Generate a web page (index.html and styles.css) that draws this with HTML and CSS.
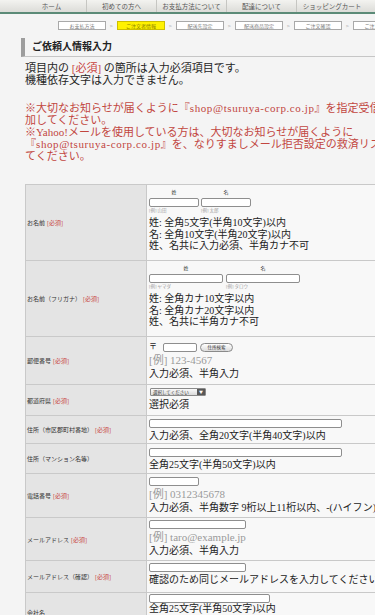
FILE: index.html
```html
<!DOCTYPE html>
<html lang="ja">
<head>
<meta charset="utf-8">
<title>ご依頼人情報入力</title>
<link rel="stylesheet" href="styles.css">
</head>
<body>
<div class="page">
  <nav class="gnav">
    <a class="gnav-item">ホーム</a>
    <a class="gnav-item">初めての方へ</a>
    <a class="gnav-item">お支払方法について</a>
    <a class="gnav-item">配達について</a>
    <a class="gnav-item">ショッピングカート</a>
  </nav>

  <ol class="steps">
    <li class="step">お支払方法</li><li class="step-sep">&gt;</li>
    <li class="step step-current">ご注文者情報</li><li class="step-sep">&gt;</li>
    <li class="step">配送先設定</li><li class="step-sep">&gt;</li>
    <li class="step">配送商品設定</li><li class="step-sep">&gt;</li>
    <li class="step">ご注文確認</li><li class="step-sep">&gt;</li>
    <li class="step">ご注文完了</li>
  </ol>

  <h2 class="heading">ご依頼人情報入力</h2>

  <p class="intro">項目内の <span class="req">[必須]</span> の箇所は入力必須項目です。<br>機種依存文字は入力できません。</p>

  <p class="notice">※大切なお知らせが届くように『<span class="mail">shop@tsuruya-corp.co.jp</span>』を指定受信設定に追<br>加してください。<br>※Yahoo!メールを使用している方は、大切なお知らせが届くように<br>『<span class="mail">shop@tsuruya-corp.co.jp</span>』を、なりすましメール拒否設定の救済リストに追加し<br>てください。</p>

  <div class="form">
    <div class="row row-name">
      <div class="label">お名前 <span class="req">[必須]</span></div>
      <div class="field pt4">
        <div class="name-pair">
          <div class="name-col"><div class="name-cap">姓</div><input type="text" class="txt w50"><div class="hint">[例] 山田</div></div>
          <div class="name-col"><div class="name-cap">名</div><input type="text" class="txt w50"><div class="hint">[例] 太郎</div></div>
        </div>
        <div class="note mt3">姓: 全角5文字(半角10文字)以内</div>
        <div class="note">名: 全角10文字(半角20文字)以内</div>
        <div class="note">姓、名共に入力必須、半角カナ不可</div>
      </div>
    </div>

    <div class="row row-name">
      <div class="label">お名前（フリガナ） <span class="req">[必須]</span></div>
      <div class="field pt4">
        <div class="name-pair name-pair-wide">
          <div class="name-col"><div class="name-cap">姓</div><input type="text" class="txt w74"><div class="hint">[例] ヤマダ</div></div>
          <div class="name-col"><div class="name-cap">名</div><input type="text" class="txt w74"><div class="hint">[例] タロウ</div></div>
        </div>
        <div class="note mt3">姓: 全角カナ10文字以内</div>
        <div class="note">名: 全角カナ20文字以内</div>
        <div class="note">姓、名共に半角カナ不可</div>
      </div>
    </div>

    <div class="row row-zip">
      <div class="label">郵便番号 <span class="req">[必須]</span></div>
      <div class="field pt5">
        <div class="zip">
          <span class="postmark">〒</span>
          <input type="text" class="txt w34">
          <span class="btn">住所検索</span>
        </div>
        <div class="ex">[例] 123-4567</div>
        <div class="note">入力必須、半角入力</div>
      </div>
    </div>

    <div class="row row-pref">
      <div class="label">都道府県 <span class="req">[必須]</span></div>
      <div class="field pt3">
        <div class="select"><span class="select-text">選択してください</span><span class="select-arrow">▼</span></div>
        <div class="note mt3">選択必須</div>
      </div>
    </div>

    <div class="row row-addr1">
      <div class="label">住所（市区郡町村番地） <span class="req">[必須]</span></div>
      <div class="field pt3">
        <input type="text" class="txt w193">
        <div class="note mt2">入力必須、全角20文字(半角40文字)以内</div>
      </div>
    </div>

    <div class="row row-addr2">
      <div class="label">住所（マンション名等）</div>
      <div class="field pt4">
        <input type="text" class="txt w193">
        <div class="note mt2">全角25文字(半角50文字)以内</div>
      </div>
    </div>

    <div class="row row-tel">
      <div class="label">電話番号 <span class="req">[必須]</span></div>
      <div class="field pt3">
        <input type="text" class="txt w50">
        <div class="ex">[例] 0312345678</div>
        <div class="note">入力必須、半角数字 9桁以上11桁以内、-(ハイフン)不要</div>
      </div>
    </div>

    <div class="row row-mail">
      <div class="label">メールアドレス <span class="req">[必須]</span></div>
      <div class="field pt2">
        <input type="text" class="txt w97">
        <div class="ex">[例] taro@example.jp</div>
        <div class="note">入力必須、半角入力</div>
      </div>
    </div>

    <div class="row row-mail2">
      <div class="label">メールアドレス（確認） <span class="req">[必須]</span></div>
      <div class="field pt2">
        <input type="text" class="txt w97">
        <div class="note mt2">確認のため同じメールアドレスを入力してください</div>
      </div>
    </div>

    <div class="row row-company">
      <div class="label">会社名</div>
      <div class="field pt1">
        <input type="text" class="txt w121">
        <div class="note">全角25文字(半角50文字)以内</div>
      </div>
    </div>
  </div>
</div>
</body>
</html>
```

FILE: styles.css
```css
html {
  overflow: hidden;
}

body {
  margin: 0;
  background: #f4f4f4;
  color: #262626;
  font-family: "Liberation Serif", "Noto Sans CJK JP", serif;
}

.page {
  width: 470px;
}

/* global nav */
.gnav {
  display: flex;
  height: 12px;
  padding-left: 17px;
  background: linear-gradient(#f3f3f0, #dcdcd8);
  border-bottom: 2px solid #5b8a77;
  font-family: "Noto Sans CJK JP", sans-serif;
  font-size: 6.5px;
  color: #555;
}

.gnav-item {
  width: 70px;
  box-sizing: border-box;
  text-align: center;
  line-height: 12px;
  border-right: 1px solid #c6c6c2;
}

.gnav-item:last-child {
  border-right: none;
}

/* steps */
.steps {
  display: flex;
  list-style: none;
  margin: 7px 0 0;
  padding: 0 0 0 58px;
  font-family: "Noto Sans CJK JP", sans-serif;
}

.step {
  width: 48px;
  height: 9px;
  box-sizing: border-box;
  border: 1px solid #a9a9a9;
  background: #fff;
  font-size: 5px;
  line-height: 7px;
  text-align: center;
  color: #777;
}

.step-current {
  background: #fff200;
  border-color: #cdbf00;
  color: #8a7f00;
}

.step-sep {
  width: 11px;
  text-align: center;
  font-size: 5px;
  line-height: 9px;
  color: #999;
}

/* heading */
.heading {
  margin: 8px 0 0 21px;
  height: 18px;
  padding-left: 7px;
  border-left: 4px solid #9d9d9d;
  border-bottom: 1px solid #c6c6c6;
  font-size: 10px;
  line-height: 18px;
  font-weight: bold;
  color: #222;
}

.intro {
  margin: 5px 0 0 25px;
  font-size: 11px;
  line-height: 12px;
}

.req {
  color: #c8433f;
}

.notice {
  margin: 16px 0 0 25px;
  font-size: 11px;
  line-height: 12px;
  color: #c2463f;
  white-space: nowrap;
}

.mail {
  letter-spacing: 0.6px;
}

/* form table */
.form {
  margin: 22px 0 0 25px;
  width: 440px;
  border-top: 1px solid #c9c9c9;
  border-left: 1px solid #c9c9c9;
}

.row {
  display: grid;
  grid-template-columns: 121px 1fr;
  box-sizing: border-box;
  border-bottom: 1px solid #c9c9c9;
}

.row-name { height: 76px; }
.row-zip { height: 48px; }
.row-pref { height: 31px; }
.row-addr1 { height: 28px; }
.row-addr2 { height: 30px; }
.row-tel { height: 44px; }
.row-mail { height: 43px; }
.row-mail2 { height: 32px; }
.row-company { height: 40px; }

.label {
  display: flex;
  align-items: center;
  padding-left: 1px;
  background: #e4e4e4;
  border-right: 1px solid #c9c9c9;
  font-size: 6px;
  color: #333;
  white-space: nowrap;
}

.label .req {
  margin-left: 2px;
}

.field {
  padding-left: 2px;
  background: #f8f8f8;
  font-size: 10px;
  line-height: 11.5px;
  white-space: nowrap;
  overflow: hidden;
}

.pt1 { padding-top: 1px; }
.pt2 { padding-top: 2px; }
.pt3 { padding-top: 3px; }
.pt4 { padding-top: 4px; }
.pt5 { padding-top: 5px; }
.mt2 { margin-top: 2px; }
.mt3 { margin-top: 3px; }

.txt {
  display: block;
  height: 9px;
  box-sizing: border-box;
  margin: 0;
  padding: 0;
  border: 1px solid #8e8e8e;
  border-radius: 2px;
  background: #fff;
}

.w34 { width: 34px; }
.w50 { width: 50px; }
.w74 { width: 74px; }
.w97 { width: 97px; }
.w121 { width: 121px; }
.w193 { width: 193px; }

.name-pair {
  display: flex;
  gap: 2px;
}

.name-pair-wide {
  gap: 3px;
}

.name-col {
  display: flex;
  flex-direction: column;
}

.name-col .txt {
  margin-top: 2px;
}

.name-cap {
  font-size: 5px;
  line-height: 7px;
  text-align: center;
  color: #333;
}

.hint {
  font-size: 4.5px;
  line-height: 7px;
  color: #a0a0a0;
}

.note {
  color: #222;
}

.ex {
  font-size: 11px;
  line-height: 16px;
  color: #9a9a9a;
}

.zip {
  display: flex;
  align-items: center;
  height: 10px;
}

.postmark {
  width: 14px;
  font-size: 8px;
  line-height: 10px;
}

.btn {
  width: 33px;
  height: 9px;
  margin-left: 3px;
  box-sizing: border-box;
  border: 1px solid #8a8a8a;
  border-radius: 5px;
  background: linear-gradient(#fff, #dcdcdc);
  font-family: "Noto Sans CJK JP", sans-serif;
  font-size: 4.5px;
  line-height: 7px;
  text-align: center;
  color: #333;
}

.select {
  display: flex;
  width: 56px;
  height: 8px;
  margin-left: 1px;
  box-sizing: border-box;
  border: 1px solid #8a8a8a;
  border-radius: 1px;
  background: linear-gradient(#fafafa, #dadada);
  font-family: "Noto Sans CJK JP", sans-serif;
}

.select-text {
  flex: 1;
  padding-left: 2px;
  font-size: 4.5px;
  line-height: 6px;
  color: #333;
}

.select-arrow {
  width: 8px;
  background: #585858;
  color: #fff;
  font-size: 4px;
  line-height: 6px;
  text-align: center;
}
```
